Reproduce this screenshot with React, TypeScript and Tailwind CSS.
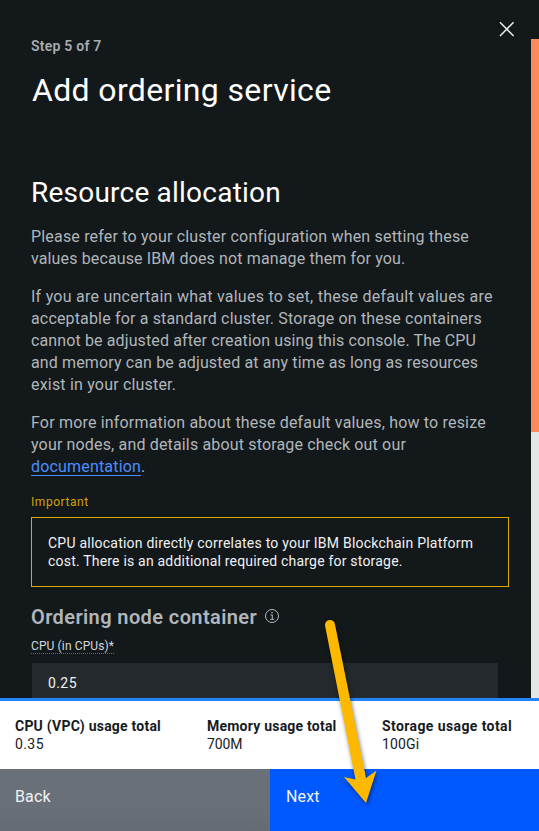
import React from "react";

type LineProps = { className?: string; children: React.ReactNode };

function Line({ className = "", children }: LineProps) {
  return <span className={`block whitespace-nowrap ${className}`}>{children}</span>;
}

function InfoIcon() {
  return (
    <svg className="-mt-0.5 size-4 text-[#b5babd]" viewBox="0 0 16 16" fill="none" stroke="currentColor">
      <circle cx="8" cy="8" r="6.5" strokeWidth="1" />
      <path d="M6.5 7h1.8v4.3M6.2 11.3h4" strokeWidth="1" />
      <circle cx="8" cy="4.7" r="0.8" fill="currentColor" stroke="none" />
    </svg>
  );
}

function CloseIcon() {
  return (
    <svg className="size-4" viewBox="0 0 16 16" stroke="#e8eaeb" strokeWidth="1.5">
      <path d="M1 1.2l13.6 13.8M14.6 1.2L1 15" />
    </svg>
  );
}

type UsageProps = { label: string; value: string; className: string; labelClass: string; valueClass: string };

function Usage({ label, value, className, labelClass, valueClass }: UsageProps) {
  return (
    <div className={`shrink-0 whitespace-nowrap pt-4 text-sm leading-[18px] text-[#171b1e] ${className}`}>
      <div className={`font-bold ${labelClass}`}>{label}</div>
      <div className={valueClass}>{value}</div>
    </div>
  );
}

export default function App() {
  return (
    <div className="relative flex h-[831px] w-[539px] flex-col overflow-hidden bg-[#13181b] font-['Roboto','Liberation_Sans',sans-serif]">
      <main className="flex h-[698px] shrink-0 overflow-hidden">
        <section className="relative w-[531px] shrink-0 pl-[31px]">
          <button aria-label="Close" className="absolute left-[499px] top-[21px]">
            <CloseIcon />
          </button>
          <div className="pt-[37px] text-sm font-semibold leading-[18px] text-[#a7adb1]">
            <Line className="tracking-[0.23px]">Step 5 of 7</Line>
          </div>
          <h1 className="mt-[15px] text-[32px] leading-10 text-white">
            <Line className="pl-px tracking-[0.35px]">Add ordering service</Line>
          </h1>
          <h2 className="mt-[65px] text-[28px] leading-9 text-white">
            <Line className="tracking-[0.22px]">Resource allocation</Line>
          </h2>
          <div className="mt-[15px] flex flex-col gap-4 text-base leading-[22px] text-[#b0b6ba]">
            <p>
              <Line className="tracking-[0.18px]">Please refer to your cluster configuration when setting these</Line>
              <Line className="tracking-[0.13px]">values because IBM does not manage them for you.</Line>
            </p>
            <p>
              <Line className="tracking-[0.25px]">If you are uncertain what values to set, these default values are</Line>
              <Line className="tracking-[0.16px]">acceptable for a standard cluster. Storage on these containers</Line>
              <Line className="tracking-[0.12px]">cannot be adjusted after creation using this console. The CPU</Line>
              <Line className="tracking-[0.13px]">and memory can be adjusted at any time as long as resources</Line>
              <Line className="tracking-[0.19px]">exist in your cluster.</Line>
            </p>
            <p>
              <Line className="tracking-[0.18px]">For more information about these default values, how to resize</Line>
              <Line className="tracking-[0.16px]">your nodes, and details about storage check out our</Line>
              <Line className="tracking-[0.18px]">
                <a className="text-[#4b8dff] shadow-[inset_0_-1px_#4b8dff]">documentation</a>.
              </Line>
            </p>
          </div>
          <div className="mt-4 text-xs leading-4 text-[#d2a106]">
            <Line className="tracking-[0.55px]">Important</Line>
          </div>
          <div className="mt-[7px] h-[70px] w-[478px] border border-[#d8a900] pl-4 pt-4 text-sm leading-[18px] text-[#f0f2f3]">
            <Line className="tracking-[0.23px]">CPU allocation directly correlates to your IBM Blockchain Platform</Line>
            <Line className="tracking-[0.2px]">cost. There is an additional required charge for storage.</Line>
          </div>
          <div className="mt-[17px] flex h-[26px] items-center gap-[7px] text-xl font-semibold text-[#b0b6ba]">
            <Line className="tracking-[0.4px]">Ordering node container</Line>
            <InfoIcon />
          </div>
          <div className="mt-2 flex h-[16px] text-xs leading-4 text-[#d5d9db]">
            <Line className="border-b border-dotted border-[#2c6fe0] tracking-[0.12px]">CPU (in CPUs)*</Line>
          </div>
          <div className="ml-px mt-[9px] h-10 w-[466px] bg-[#23292c] pl-4 text-sm leading-10 tracking-[0.4px] text-[#f0f2f3]">0.25</div>
        </section>
        <aside className="w-2 bg-[#e5e5e5]">
          <div className="h-[39px] bg-[#13181b]" />
          <div className="h-[393px] bg-[#ff8a5c]" />
        </aside>
      </main>
      <footer className="shrink-0">
        <div className="flex h-[71px] border-t-[3px] border-[#2383f7] bg-white pl-[15px]">
          <Usage label="CPU (VPC) usage total" value="0.35" className="w-48" labelClass="tracking-[0.22px]" valueClass="tracking-[0.4px]" />
          <Usage label="Memory usage total" value="700M" className="w-[175px]" labelClass="tracking-[0.22px]" valueClass="tracking-[-0.1px]" />
          <Usage label="Storage usage total" value="100Gi" className="w-[150px]" labelClass="tracking-[0.4px]" valueClass="tracking-[0.15px]" />
        </div>
        <div className="flex h-[62px] text-base leading-[22px] tracking-[0.15px] text-[#f1f3f4]">
          <button className="flex w-[270px] bg-linear-to-b from-[#697077] from-60% to-[#646b72] pl-[15px] pt-[17px]">Back</button>
          <button className="flex w-[269px] bg-[#0059ff] pl-4 pt-[17px]">Next</button>
        </div>
      </footer>
      <svg className="pointer-events-none absolute left-[310px] top-[610px] h-[210px] w-[90px] drop-shadow-[1px_2px_2px_rgba(0,0,0,0.5)]" viewBox="310 610 90 210" fill="#fdb900">
        <path d="M325 625.5a5 5 0 0 1 10-1L366 778L376.5 770.5L366 803L344 777L355.5 779.5Z" />
      </svg>
    </div>
  );
}
